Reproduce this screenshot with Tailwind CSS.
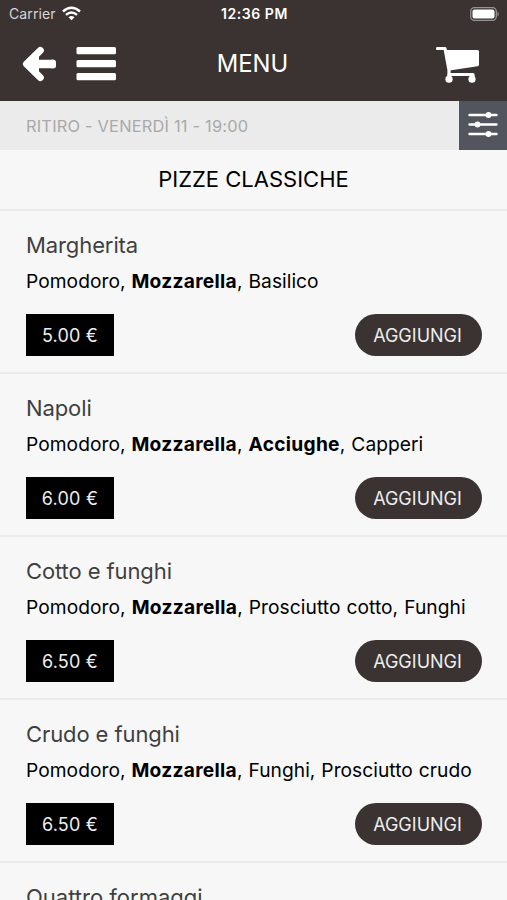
<!DOCTYPE html>
<html lang="it">
<head>
<meta charset="utf-8">
<title>Menu</title>
<script src="https://cdn.jsdelivr.net/npm/@tailwindcss/browser@4"></script>
</head>
<body class="h-[900px] overflow-hidden bg-[#f7f7f7] font-['Inter','Liberation_Sans',sans-serif] text-black">
<header class="h-[101px] bg-[#3a3332] text-white">
  <div class="grid h-[27px] grid-cols-3 items-center pl-[9px] pr-[7px]">
    <div class="flex items-center gap-[6px] text-[14px] text-[#d8d6d6]"><span class="tracking-[0.1px]">Carrier</span>
      <svg class="h-[15px] w-[19px]" viewBox="0 0 19 15" fill="none" stroke="#fff" stroke-width="2.5"><path d="M1 5.5Q9.500 -2 18 5.500"/><path d="M4 8.900Q9.500 4 15 8.900"/><path d="M9.500 14.300L6.500 11.300Q9.500 8.900 12.500 11.300Z" fill="#fff" stroke="none"/></svg>
    </div>
    <div class="text-center text-[14px] font-semibold tracking-[0.55px]">12:36 PM</div>
    <svg class="h-[14px] w-[30px] justify-self-end" viewBox="0 0 30 14"><rect x=".7" y=".7" width="25.600" height="12.600" rx="3.800" fill="none" stroke="#989393" stroke-width="1.300"/><rect x="2.500" y="2.500" width="22" height="9" rx="2" fill="#fff"/><path d="M27.500 4.500Q30 7 27.500 9.500Z" fill="#989393"/></svg>
  </div>
  <div class="grid h-[74px] grid-cols-3 items-center pl-[22px] pr-[27px]">
    <div class="flex items-center gap-[19px]">
      <svg class="h-[38px] w-[35px]" viewBox="0 0 35 38" stroke="#fff" stroke-linejoin="round"><path d="M18.300 5.500L4.500 19L18.300 32.500" fill="none" stroke-width="7" stroke-linecap="round"/><path d="M5 19L15.500 9V29Z" fill="#fff" stroke-width="3"/><path d="M8 19H32" stroke-width="8.500"/><rect x="27" y="14.750" width="7" height="8.500" rx="2.500" fill="#fff" stroke="none"/></svg>
      <svg class="h-[34px] w-[40px]" viewBox="0 0 40 34" fill="#fff"><rect x="0.500" y="0" width="39.500" height="7.300" rx="1.500"/><rect x="0.500" y="13" width="39.500" height="7.300" rx="1.500"/><rect x="0.500" y="26" width="39.500" height="7.300" rx="1.500"/></svg>
    </div>
    <h1 class="pl-[3px] text-center text-[23.800px]">MENU</h1>
    <svg class="h-[37px] w-[44px] justify-self-end" viewBox="0 0 44 37"><path d="M1.500 2.500H9L13 24V28.500H37V33" fill="none" stroke="#fff" stroke-width="3.200" stroke-linecap="round" stroke-linejoin="round"/><path d="M13 28V33" stroke="#fff" stroke-width="3.200"/><path d="M9.500 4H41.500Q43 4 43 5.500V18.500Q43 20 41.500 20.300L13.500 24.500Z" fill="#fff"/><circle cx="13" cy="33.200" r="3.600" fill="#fff"/><circle cx="36" cy="33.200" r="3.600" fill="#fff"/></svg>
  </div>
</header>
<div class="flex h-[49px] items-stretch bg-[#ebebeb]">
  <div class="flex flex-1 items-center pl-[26px] pt-[2px] text-[16.400px] tracking-[0.2px] text-[#a9a9a9]"><span>RITIRO - VENERDÌ 11 - 19:00</span></div>
  <div class="flex w-12 items-center justify-center bg-[#53555e] pb-[3px]">
    <svg class="h-[26px] w-[30px]" viewBox="0 0 30 26" fill="#fff"><path d="M1.500 4H28.500M1.500 13.500H28.500M1.500 23H28.500" stroke="#fff" stroke-width="2.400" stroke-linecap="round"/><circle cx="20.500" cy="4" r="2.900"/><circle cx="9.500" cy="13.500" r="2.900"/><circle cx="20.500" cy="23" r="2.900"/></svg>
  </div>
</div>
<h2 class="flex h-[61px] items-center justify-center border-b-2 border-[#ebebeb] text-[22px]"><span>PIZZE CLASSICHE</span></h2>
<main>
  <article class="flex h-[163px] flex-col border-b-2 border-[#ebebeb] pl-[26px] pr-[25px] pt-[19px]">
    <h3 class="text-[22px] leading-[30px] tracking-[-0.1px] text-[#3f3f3f]">Margherita</h3>
    <p class="mt-[7px] whitespace-nowrap text-[19.200px] leading-[28px] tracking-[0.04px] [word-spacing:0.5px]">Pomodoro, <b class="font-bold tracking-[0.28px]">Mozzarella</b>, Basilico</p>
    <div class="mt-[19px] flex justify-between text-[18px] text-[#ededed]"><span class="flex h-[42px] w-[88px] items-center justify-center bg-black tracking-[0.2px]">5.00 €</span><button class="h-[42px] w-[127px] rounded-full bg-[#3a3332] pr-[2px]">AGGIUNGI</button></div>
  </article>
  <article class="flex h-[163px] flex-col border-b-2 border-[#ebebeb] pl-[26px] pr-[25px] pt-[19px]">
    <h3 class="text-[22px] leading-[30px] tracking-[-0.1px] text-[#3f3f3f]">Napoli</h3>
    <p class="mt-[7px] whitespace-nowrap text-[19.200px] leading-[28px] tracking-[0.04px] [word-spacing:0.5px]">Pomodoro, <b class="font-bold tracking-[0.28px]">Mozzarella</b>, <b class="font-bold tracking-[0.28px]">Acciughe</b>, Capperi</p>
    <div class="mt-[19px] flex justify-between text-[18px] text-[#ededed]"><span class="flex h-[42px] w-[88px] items-center justify-center bg-black tracking-[0.2px]">6.00 €</span><button class="h-[42px] w-[127px] rounded-full bg-[#3a3332] pr-[2px]">AGGIUNGI</button></div>
  </article>
  <article class="flex h-[163px] flex-col border-b-2 border-[#ebebeb] pl-[26px] pr-[25px] pt-[19px]">
    <h3 class="text-[22px] leading-[30px] tracking-[-0.1px] text-[#3f3f3f]">Cotto e funghi</h3>
    <p class="mt-[7px] whitespace-nowrap text-[19.200px] leading-[28px] tracking-[0.06px] [word-spacing:0.5px]">Pomodoro, <b class="font-bold tracking-[0.28px]">Mozzarella</b>, Prosciutto cotto, Funghi</p>
    <div class="mt-[19px] flex justify-between text-[18px] text-[#ededed]"><span class="flex h-[42px] w-[88px] items-center justify-center bg-black tracking-[0.2px]">6.50 €</span><button class="h-[42px] w-[127px] rounded-full bg-[#3a3332] pr-[2px]">AGGIUNGI</button></div>
  </article>
  <article class="flex h-[163px] flex-col border-b-2 border-[#ebebeb] pl-[26px] pr-[25px] pt-[19px]">
    <h3 class="text-[22px] leading-[30px] tracking-[-0.1px] text-[#3f3f3f]">Crudo e funghi</h3>
    <p class="mt-[7px] whitespace-nowrap text-[19.200px] leading-[28px] tracking-[0.04px] [word-spacing:0.5px]">Pomodoro, <b class="font-bold tracking-[0.28px]">Mozzarella</b>, Funghi, Prosciutto crudo</p>
    <div class="mt-[19px] flex justify-between text-[18px] text-[#ededed]"><span class="flex h-[42px] w-[88px] items-center justify-center bg-black tracking-[0.2px]">6.50 €</span><button class="h-[42px] w-[127px] rounded-full bg-[#3a3332] pr-[2px]">AGGIUNGI</button></div>
  </article>
  <article class="pl-[26px] pt-[19px]">
    <h3 class="text-[22px] leading-[30px] text-[#3f3f3f]">Quattro formaggi</h3>
  </article>
</main>
</body>
</html>
